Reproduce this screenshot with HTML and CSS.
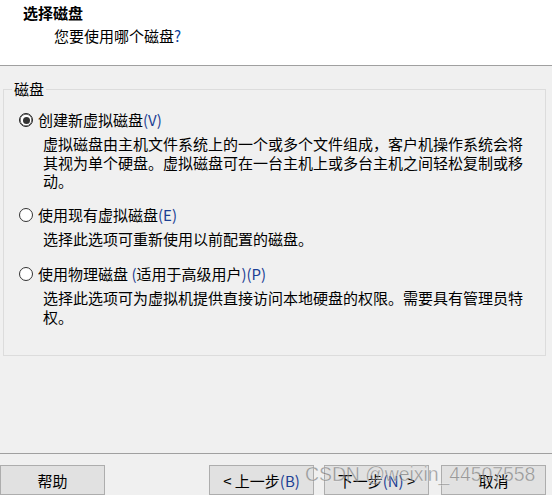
FILE: index.html
```html
<!DOCTYPE html>
<html lang="zh-CN">
<head>
<meta charset="utf-8">
<link rel="stylesheet" href="styles.css">
</head>
<body>
<div class="win">
  <header class="head">
    <div class="title">选择磁盘</div>
    <div class="subtitle">您要使用哪个磁盘<span class="q">?</span></div>
  </header>
  <main class="content">
    <fieldset class="group">
      <legend class="legend">磁盘</legend>
      <div class="option opt-1">
        <div class="opt-row"><span class="radio checked"></span><span>创建新虚拟磁盘<span class="acc">(V)</span></span></div>
        <p class="desc">虚拟磁盘由主机文件系统上的一个或多个文件组成，客户机操作系统会将其视为单个硬盘。虚拟磁盘可在一台主机上或多台主机之间轻松复制或移动。</p>
      </div>
      <div class="option opt-2">
        <div class="opt-row"><span class="radio"></span><span>使用现有虚拟磁盘<span class="acc">(E)</span></span></div>
        <p class="desc">选择此选项可重新使用以前配置的磁盘。</p>
      </div>
      <div class="option opt-3">
        <div class="opt-row"><span class="radio"></span><span>使用物理磁盘 <span class="acc">(</span>适用于高级用户<span class="acc">)(P)</span></span></div>
        <p class="desc">选择此选项可为虚拟机提供直接访问本地硬盘的权限。需要具有管理员特权。</p>
      </div>
    </fieldset>
  </main>
  <footer class="foot">
    <button class="btn btn-help">帮助</button>
    <div class="nav">
      <button class="btn">&lt; 上一步<span class="acc">(B)</span></button>
      <button class="btn">下一步<span class="acc">(N)</span> &gt;</button>
    </div>
    <button class="btn btn-cancel">取消</button>
  </footer>
  <div class="watermark">CSDN @weixin_44507558</div>
</div>
</body>
</html>
```
FILE: styles.css
```css
html, body {
  margin: 0;
  padding: 0;
}
body {
  width: 552px;
  height: 495px;
  overflow: hidden;
  font-family: "Noto Sans CJK SC", "Microsoft YaHei", sans-serif;
  font-size: 15px;
  color: #000;
  background: #f0f0f0;
}
.win {
  position: relative;
  width: 552px;
  height: 495px;
  display: flex;
  flex-direction: column;
}
.head {
  height: 66px;
  background: #fff;
  border-bottom: 1px solid #a0a0a0;
  box-sizing: content-box;
}
.title {
  font-weight: bold;
  padding-left: 23px;
  line-height: 20px;
  margin-top: 3px;
}
.subtitle {
  padding-left: 54px;
  line-height: 20px;
  margin-top: 3px;
}
.q { color: #0a3f9c; }
.acc { color: #1c3f94; }
.content {
  height: 391px;
  padding: 0 6px 0 3px;
  box-sizing: border-box;
}
.group {
  margin: 15px 0 0 0;
  padding: 0 0 0 15px;
  border: 1px solid #dcdcdc;
  height: 275px;
  box-sizing: border-box;
  min-width: 0;
}
.legend {
  padding: 0 2px;
  margin-left: -7px;
  line-height: 16px;
}
.opt-1 { margin-top: 13px; }
.opt-2 { margin-top: 14px; }
.opt-3 { margin-top: 16px; }
.opt-row {
  display: flex;
  align-items: center;
  gap: 5px;
  line-height: 20px;
}
.radio {
  width: 12px;
  height: 12px;
  border: 1px solid #333;
  border-radius: 50%;
  background: #fff;
  position: relative;
  flex: none;
}
.radio.checked {
  border-color: #222;
  box-shadow: inset 0 0 0 0.5px #222;
}
.radio.checked::after {
  content: "";
  position: absolute;
  left: 2.5px;
  top: 2.5px;
  width: 7px;
  height: 7px;
  border-radius: 50%;
  background: #333;
}
.desc {
  margin: 5px 0 0 24px;
  line-height: 18.5px;
  width: 480px;
}
.foot {
  border-top: 1px solid #a0a0a0;
  display: flex;
  align-items: flex-start;
  padding-top: 11px;
  flex: 1;
}
.btn {
  font-family: inherit;
  font-size: 15px;
  height: 30px;
  width: 105px;
  background: #e1e1e1;
  border: 1px solid #adadad;
  padding: 0;
  color: #000;
  box-sizing: border-box;
}
.nav {
  display: flex;
  gap: 10px;
  margin-left: 104px;
}
.btn-cancel {
  margin-left: 12px;
}
.watermark {
  position: absolute;
  left: 305px;
  top: 463px;
  font-family: "Liberation Sans", Arial, sans-serif;
  font-size: 19.5px;
  color: rgba(90, 90, 90, 0.55);
  -webkit-text-stroke: 0.4px rgba(255,255,255,0.6);
  letter-spacing: -0.1px;
  white-space: nowrap;
  pointer-events: none;
}
```
